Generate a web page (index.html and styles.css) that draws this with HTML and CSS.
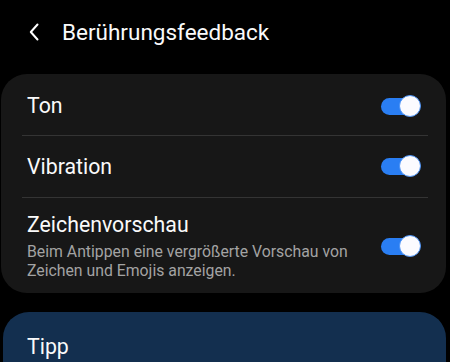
FILE: index.html
```html
<!DOCTYPE html>
<html lang="de">
<head>
<meta charset="utf-8">
<link rel="stylesheet" href="styles.css">
</head>
<body>
<header class="appbar">
  <svg class="back" width="10" height="18" viewBox="0 0 10 18"><path d="M8.5 1.5 L1.8 9 L8.5 16.5" fill="none" stroke="#fff" stroke-width="2" stroke-linecap="round" stroke-linejoin="round"/></svg>
  <h1 class="title">Berührungsfeedback</h1>
</header>
<section class="card">
  <div class="row">
    <div class="label">Ton</div>
    <span class="switch"><span class="thumb"></span></span>
  </div>
  <div class="divider"></div>
  <div class="row">
    <div class="label">Vibration</div>
    <span class="switch"><span class="thumb"></span></span>
  </div>
  <div class="divider"></div>
  <div class="row row-tall">
    <div class="texts">
      <div class="label">Zeichenvorschau</div>
      <div class="sub">Beim Antippen eine vergrößerte Vorschau von Zeichen und Emojis anzeigen.</div>
    </div>
    <span class="switch"><span class="thumb"></span></span>
  </div>
</section>
<section class="tip">
  <div class="tip-title">Tipp</div>
</section>
</body>
</html>
```
FILE: styles.css
```css
html, body {
  margin: 0;
  padding: 0;
  background: #000;
  font-family: Roboto, "Noto Sans", sans-serif;
  color: #fafafa;
  width: 450px;
  height: 362px;
  overflow: hidden;
}
.appbar {
  height: 74px;
  display: flex;
  align-items: center;
  padding-left: 29px;
  padding-bottom: 10px;
  box-sizing: border-box;
  gap: 23px;
}
.back { display: block; flex: none; }
.title {
  margin: 0;
  font-size: 22.5px;
  font-weight: 400;
  letter-spacing: 0;
}
.card {
  margin: 0 4px 0 1px;
  background: #171717;
  border-radius: 26px;
  padding: 0 25px 0 26px;
}
.row {
  display: flex;
  align-items: center;
  justify-content: space-between;
  height: 61px;
}
.row:first-child { padding-top: 3px; height: 58px; }
.row-tall {
  height: auto;
  padding: 14px 0 13px;
}
.label {
  font-size: 21.3px;
  line-height: 26px;
}
.sub {
  margin-top: 5px;
  font-size: 15.8px;
  line-height: 18.5px;
  color: #a3a3a3;
  max-width: 340px;
}
.divider {
  height: 1px;
  background: #343434;
  margin: 0 -7px 0 -5px;
}
.switch {
  position: relative;
  flex: none;
  width: 34px;
  height: 17px;
  border-radius: 9px;
  background: #2a7ef3;
  margin-right: 6px;
}
.thumb {
  position: absolute;
  right: -6px;
  top: -3px;
  width: 20px;
  height: 20px;
  border-radius: 50%;
  background: #fbfbff;
  border: 1px solid #4d93f5;
}
.tip {
  margin: 19px 4px 0 3px;
  background: #132f4f;
  border-radius: 26px 26px 0 0;
  padding: 22px 24px 3px;
}
.tip-title {
  font-size: 21.3px;
  line-height: 26px;
}
```
